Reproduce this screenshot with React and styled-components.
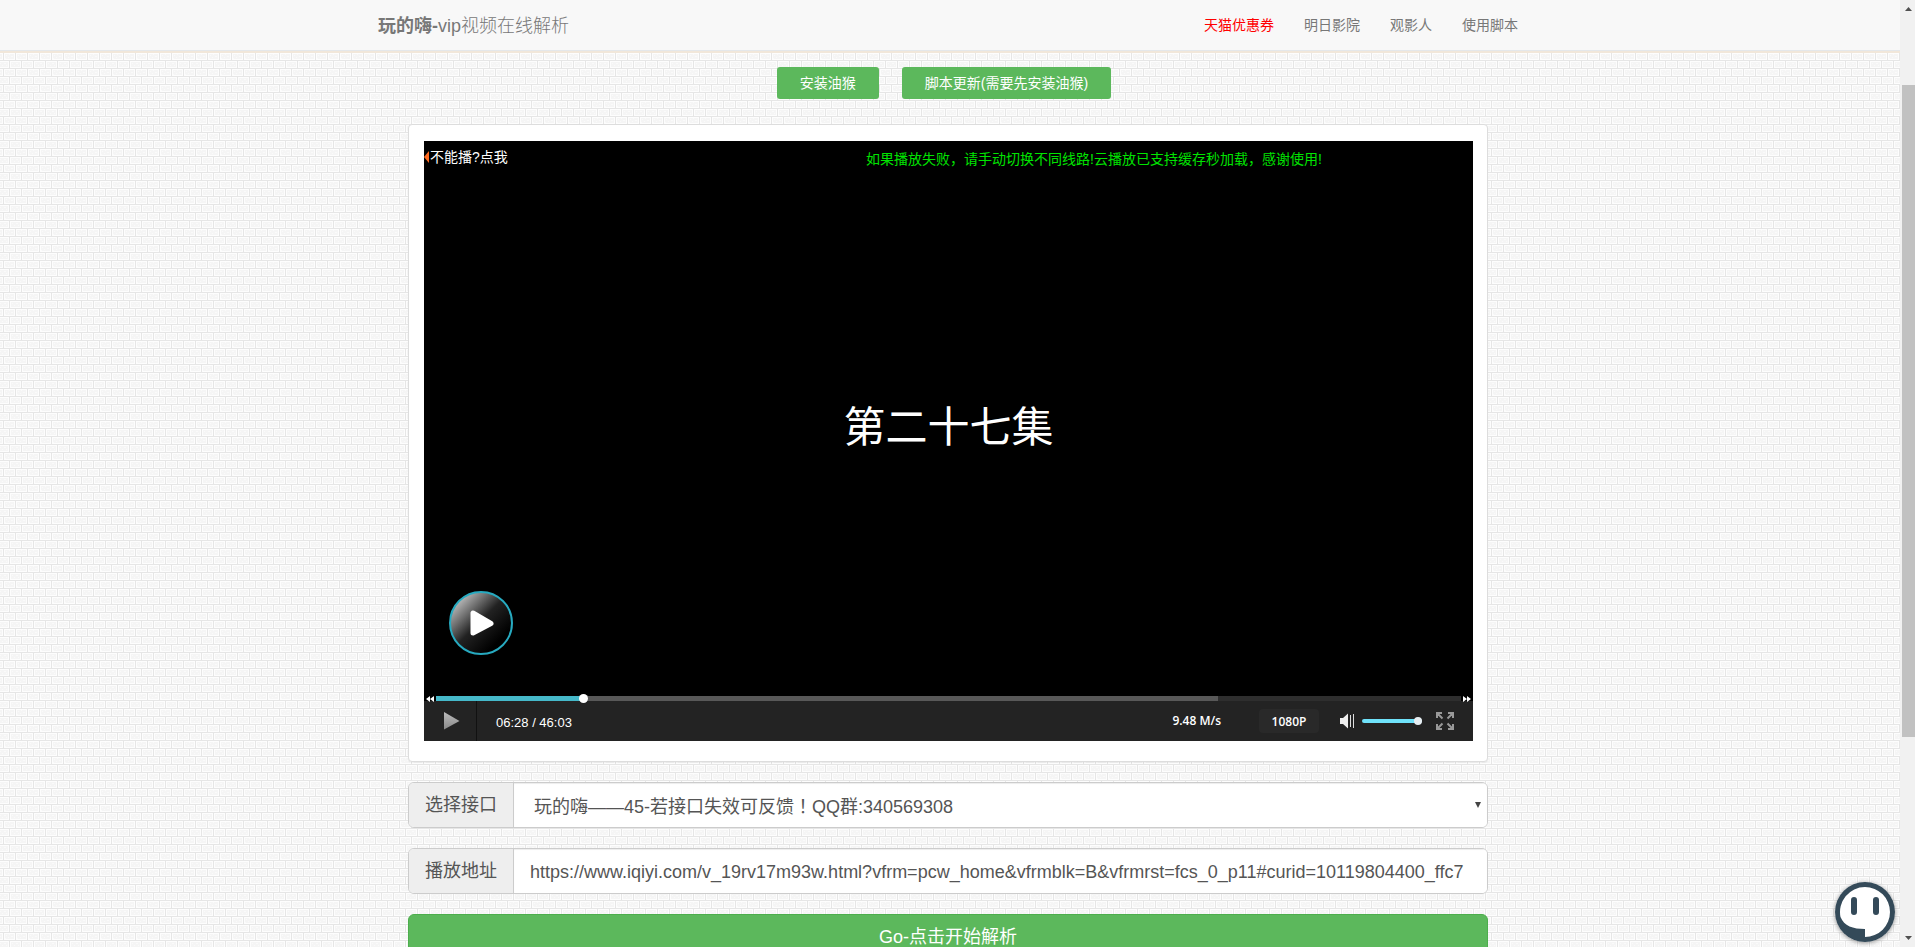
import React, { useState } from 'react';
import styled, { createGlobalStyle, ThemeProvider } from 'styled-components';

const theme = {
  green: '#5cb85c',
  greenDark: '#4cae4c',
  border: '#ccc',
  text: '#555',
  muted: '#777',
  cyan: '#45b8c9',
};

// brick wall tile, 12x16
const brick =
  "<svg xmlns='http://www.w3.org/2000/svg' width='12' height='16' shape-rendering='crispEdges'>" +
  "<rect width='12' height='16' fill='#fdfdfd'/>" +
  "<path fill='#e6e6e6' d='M0 0h12v1H0zM0 8h12v1H0zM0 1h1v7H0zM6 9h1v7H6z'/>" +
  "<path fill='#f5f5f5' d='M2 2h9v5H2zM8 10h4v5H8zM0 10h5v5H0z'/>" +
  "<path fill='#fafafa' d='M3 3h1v1H3zM6 2h1v1H6zM8 4h2v1H8zM5 5h1v1H5zM2 6h1v1H2zM9 11h1v1H9zM11 13h1v1h-1zM1 11h2v1H1zM3 13h1v1H3z'/>" +
  '</svg>';

const arrow =
  "<svg xmlns='http://www.w3.org/2000/svg' width='6' height='6'><path fill='#444' d='M0 0h6L3 6z'/></svg>";

const svgUrl = (svg) => `url("data:image/svg+xml,${encodeURIComponent(svg)}")`;

const GlobalStyle = createGlobalStyle`
  * {
    box-sizing: border-box;
  }
  body {
    margin: 0;
    font-family: "Liberation Sans", "Noto Sans CJK SC", sans-serif;
    font-size: 14px;
    line-height: 20px;
    color: #333;
  }
  button, input, select {
    font-family: inherit;
  }
`;

const Shell = styled.div`
  display: flex;
  height: 100vh;
  background: ${svgUrl(brick)} 3px 4px;
`;

const Page = styled.div`
  flex: 1;
  min-width: 0;
  display: flex;
  flex-direction: column;
`;

const Header = styled.header`
  flex: none;
  padding-right: 4px;
  background: #f8f8f8;
  border-bottom: 2px solid #f1e7da;
  box-shadow: inset 0 -1px 0 #e4e7ea;
`;

const HeaderInner = styled.div`
  display: flex;
  align-items: center;
  justify-content: space-between;
  max-width: 1170px;
  height: 51px;
  margin: 0 auto;
  padding-left: 15px;
`;

const Brand = styled.a`
  font-size: 18px;
  font-weight: 300;
  color: ${(p) => p.theme.muted};
  text-decoration: none;

  b {
    font-weight: 700;
  }
`;

const Nav = styled.nav`
  display: flex;
`;

const NavLink = styled.a`
  padding: 14px 15px 16px;
  color: ${(p) => (p.$hot ? '#f00' : p.theme.muted)};
  text-decoration: none;
`;

const Content = styled.main`
  flex: 1;
  min-height: 0;
  overflow-y: auto;
  scrollbar-width: none;
  padding: 14px 4px 0 0;
`;

const Column = styled.div`
  display: flex;
  flex-direction: column;
  gap: 20px;
  max-width: 1080px;
  margin: 0 auto;
  padding-bottom: 20px;
`;

const ScriptRow = styled.div`
  display: flex;
  justify-content: center;
  gap: 23px;
  padding: 0 8px 5px 0;
`;

const ScriptButton = styled.button`
  height: 32px;
  padding: 0 23px 3px;
  border: 0;
  border-radius: 3px;
  background: ${(p) => p.theme.green};
  color: #fff;
  font-size: 14px;
  cursor: pointer;
`;

const Panel = styled.section`
  padding: 16px 14px 20px 15px;
  border: 1px solid #ddd;
  border-radius: 4px;
  background: #fff;
  box-shadow: 0 1px 1px rgba(0, 0, 0, 0.05);
`;

const Player = styled.div`
  display: flex;
  flex-direction: column;
  height: 600px;
  background: #000;
`;

const Screen = styled.div`
  flex: 1;
  display: grid;
  grid-template-columns: 442px 1fr;
  grid-template-rows: 32px 1fr 105px;
`;

const Help = styled.a`
  display: flex;
  align-items: center;
  gap: 1px;
  color: #fff;
  text-decoration: none;
`;

const Notice = styled.p`
  margin: 0;
  padding-top: 8px;
  color: #00e400;
`;

const Episode = styled.h1`
  grid-column: 1 / 3;
  align-self: center;
  margin: 0;
  padding-top: 92px;
  color: #fff;
  font-size: 42px;
  line-height: 48px;
  font-weight: 400;
  text-align: center;
`;

const BigPlay = styled.button`
  width: 64px;
  height: 64px;
  margin-left: 25px;
  padding: 0;
  border: 2px solid #27aac0;
  border-radius: 50%;
  background: linear-gradient(135deg, #ccc 8%, #222 48%, #000 80%);
  cursor: pointer;
`;

// sits above the control bar so the knob can overhang it
const SeekRow = styled.div`
  position: relative;
  z-index: 1;
  display: flex;
  align-items: center;
  height: 5px;
`;

const SeekIcon = styled.button`
  display: flex;
  justify-content: center;
  width: 12px;
  padding: 0;
  border: 0;
  background: none;
`;

const Range = styled.input`
  appearance: none;
  margin: 0;
  height: ${(p) => p.$size}px;
  background: transparent;
  cursor: pointer;

  &::-webkit-slider-runnable-track {
    height: ${(p) => p.$track}px;
    border-radius: ${(p) => p.$round || 0}px;
    background: ${(p) => p.$fill};
  }
  &::-webkit-slider-thumb {
    appearance: none;
    width: ${(p) => p.$size}px;
    height: ${(p) => p.$size}px;
    margin-top: -2px;
    border-radius: 50%;
    background: ${(p) => p.$knob};
  }
`;

const SeekRange = styled(Range)`
  flex: 1;
  min-width: 0;
`;

const VolumeRange = styled(Range)`
  width: 60px;
  margin: 0 14px 0 7px;
`;

const Controls = styled.div`
  display: flex;
  align-items: center;
  height: 40px;
  padding-right: 19px;
  background: #232323;
  color: #fff;
  font-size: 13px;
`;

const PlayButton = styled.button`
  width: 53px;
  height: 40px;
  padding: 0 0 0 19px;
  border: 0;
  border-right: 1px solid #111;
  background: none;
  text-align: left;
  cursor: pointer;

  svg {
    display: block;
  }
`;

const Time = styled.span`
  flex: 1;
  padding: 4px 0 0 19px;
`;

const Speed = styled.span`
  font-family: "Open Sans", sans-serif;
  font-size: 12px;
  font-weight: 600;
  margin-right: 38px;
`;

const Quality = styled.button`
  width: 60px;
  height: 24px;
  margin-right: 20px;
  padding: 0;
  border: 0;
  border-radius: 4px;
  background: #292929;
  color: #fff;
  font-family: "Open Sans", sans-serif;
  font-size: 12px;
  font-weight: 600;
`;

const IconButton = styled.button`
  display: flex;
  padding: 0;
  border: 0;
  background: none;
  cursor: pointer;
`;

const Group = styled.div`
  display: flex;
  height: 46px;
  border: 1px solid ${(p) => p.theme.border};
  border-radius: 6px;
  overflow: hidden;
  background: #fff;
`;

const Addon = styled.label`
  display: flex;
  align-items: center;
  padding: 0 16px;
  border-right: 1px solid ${(p) => p.theme.border};
  background: #eee;
  color: ${(p) => p.theme.text};
  font-size: 18px;
`;

const Select = styled.select`
  flex: 1;
  min-width: 0;
  appearance: none;
  padding: 4px 20px 0;
  border: 0;
  background: #fff ${svgUrl(arrow)} no-repeat right 6px center;
  box-shadow: inset 0 1px 1px rgba(0, 0, 0, 0.075);
  color: ${(p) => p.theme.text};
  font-family: "Liberation Sans", "Noto Sans CJK TC", sans-serif;
  font-size: 18px;
`;

const UrlInput = styled.input`
  flex: 1;
  min-width: 0;
  padding: 2px 16px 0;
  border: 0;
  box-shadow: inset 0 1px 1px rgba(0, 0, 0, 0.075);
  color: ${(p) => p.theme.text};
  font-size: 18px;
`;

const GoButton = styled.button`
  height: 46px;
  padding: 0 0 4px;
  border: 1px solid ${(p) => p.theme.greenDark};
  border-radius: 6px;
  background: ${(p) => p.theme.green};
  color: #fff;
  font-size: 18px;
  cursor: pointer;
`;

const ScrollBar = styled.div`
  display: flex;
  flex-direction: column;
  align-items: center;
  width: 15px;
  padding-left: 2px;
  background: #f1f1f1;

  svg {
    flex: none;
  }
`;

const ScrollSpace = styled.div`
  flex: ${(p) => p.$part};
`;

const ScrollThumb = styled.div`
  flex: 652;
  align-self: stretch;
  background: #c1c1c1;
`;

const ChatFace = styled.button`
  position: fixed;
  right: 20px;
  bottom: 5px;
  width: 60px;
  height: 60px;
  padding: 0;
  border: 0;
  border-radius: 50%;
  background: none;
  box-shadow: 0 1px 4px rgba(0, 0, 0, 0.4);
  cursor: pointer;

  svg {
    display: block;
  }
`;

const links = [
  { text: '天猫优惠券', hot: true },
  { text: '明日影院' },
  { text: '观影人' },
  { text: '使用脚本' },
];

const DURATION = 2763;

const App = () => {
  const [position, setPosition] = useState(388);
  const [volume, setVolume] = useState(100);
  const [url, setUrl] = useState(
    'https://www.iqiyi.com/v_19rv17m93w.html?vfrm=pcw_home&vfrmblk=B&vfrmrst=fcs_0_p11#curid=10119804400_ffc7'
  );

  const played = (position / DURATION) * 100;

  return (
    <ThemeProvider theme={theme}>
      <GlobalStyle />
      <Shell>
        <Page>
          <Header>
            <HeaderInner>
              <Brand href="#"><b>玩的嗨-</b>vip视频在线解析</Brand>
              <Nav>
                {links.map((link) => (
                  <NavLink key={link.text} href="#" $hot={link.hot}>{link.text}</NavLink>
                ))}
              </Nav>
            </HeaderInner>
          </Header>

          <Content>
            <Column>
              <ScriptRow>
                <ScriptButton>安装油猴</ScriptButton>
                <ScriptButton>脚本更新(需要先安装油猴)</ScriptButton>
              </ScriptRow>

              <Panel>
                <Player>
                  <Screen>
                    <Help href="#">
                      <svg width="5" height="12"><path d="M5 0v12L0 6z" fill="#ff6a1f" /></svg>
                      不能播?点我
                    </Help>
                    <Notice>如果播放失败，请手动切换不同线路!云播放已支持缓存秒加载，感谢使用!</Notice>
                    <Episode>第二十七集</Episode>
                    <BigPlay aria-label="播放">
                      <svg width="60" height="60" viewBox="0 0 60 60">
                        <path d="M22 20v20L40 30.500z" fill="#fff" stroke="#fff" strokeWidth="5" strokeLinejoin="round" />
                      </svg>
                    </BigPlay>
                  </Screen>
                  <SeekRow>
                    <SeekIcon aria-label="后退">
                      <svg width="8" height="6"><path d="M4 0v6L0 3zM8 0v6L4 3z" fill="#fff" /></svg>
                    </SeekIcon>
                    <SeekRange
                      type="range"
                      aria-label="进度"
                      min="0"
                      max={DURATION}
                      value={position}
                      onChange={(e) => setPosition(Number(e.target.value))}
                      $size={9}
                      $track={5}
                      $knob="#fff"
                      $fill={`linear-gradient(90deg, ${theme.cyan} ${played}%, #585858 ${played}%, #585858 76.3%, #2e2e2e 76.3%)`}
                    />
                    <SeekIcon aria-label="前进">
                      <svg width="8" height="6"><path d="M0 0v6l4-3zM4 0v6l4-3z" fill="#fff" /></svg>
                    </SeekIcon>
                  </SeekRow>
                  <Controls>
                    <PlayButton aria-label="播放">
                      <svg width="17" height="18">
                        <defs>
                          <linearGradient id="tri" x1="0" y1="0" x2="0" y2="1">
                            <stop offset="0" stopColor="#bbb" />
                            <stop offset="1" stopColor="#888" />
                          </linearGradient>
                        </defs>
                        <path d="M1 0v17.500L16.500 9z" fill="url(#tri)" />
                      </svg>
                    </PlayButton>
                    <Time>06:28 / 46:03</Time>
                    <Speed>9.48 M/s</Speed>
                    <Quality>1080P</Quality>
                    <IconButton aria-label="音量">
                      <svg width="16" height="16">
                        <path d="M1 5h3l5-4.500v15L4 11H1z" fill="#eee" />
                        <path d="M11.500 2v12M14.500 1v14" stroke="#ddd" strokeWidth="1" />
                      </svg>
                    </IconButton>
                    <VolumeRange
                      type="range"
                      aria-label="音量大小"
                      value={volume}
                      onChange={(e) => setVolume(Number(e.target.value))}
                      $size={8}
                      $track={4}
                      $round={2}
                      $knob="#e8eef2"
                      $fill={`linear-gradient(90deg, #6fe2fa ${volume}%, #444 ${volume}%)`}
                    />
                    <IconButton aria-label="全屏">
                      <svg width="18" height="18" fill="none" stroke="#999" strokeWidth="2">
                        <path d="M1 6V1h5M12 1h5v5M17 12v5h-5M6 17H1v-5M1 1l5.500 5.500M17 1l-5.500 5.500M17 17l-5.500-5.500M1 17l5.500-5.500" />
                      </svg>
                    </IconButton>
                  </Controls>
                </Player>
              </Panel>

              <Group>
                <Addon htmlFor="line">选择接口</Addon>
                <Select id="line">
                  <option>玩的嗨——45-若接口失效可反馈！QQ群:340569308</option>
                </Select>
              </Group>

              <Group>
                <Addon htmlFor="url">播放地址</Addon>
                <UrlInput id="url" type="text" value={url} onChange={(e) => setUrl(e.target.value)} />
              </Group>

              <GoButton>Go-点击开始解析</GoButton>
            </Column>
          </Content>
        </Page>

        <ScrollBar aria-hidden="true">
          <svg width="13" height="17"><path d="M3 11h7L6.500 7z" fill="#505050" /></svg>
          <ScrollSpace $part={68} />
          <ScrollThumb />
          <ScrollSpace $part={193} />
          <svg width="13" height="17"><path d="M3 6h7l-3.500 4z" fill="#505050" /></svg>
        </ScrollBar>
      </Shell>

      <ChatFace aria-label="在线客服">
        <svg width="60" height="60" viewBox="0 0 60 60">
          <circle cx="30" cy="30" r="30" fill="#344a59" />
          <path d="M30 5a25 25 0 0 1 0 50V47C18 47 9 44 5.500 35A25 25 0 0 1 30 5z" fill="#fff" />
          <path d="M19 18v12M41 18v12" stroke="#344a59" strokeWidth="6" strokeLinecap="round" />
        </svg>
      </ChatFace>
    </ThemeProvider>
  );
};

export default App;
